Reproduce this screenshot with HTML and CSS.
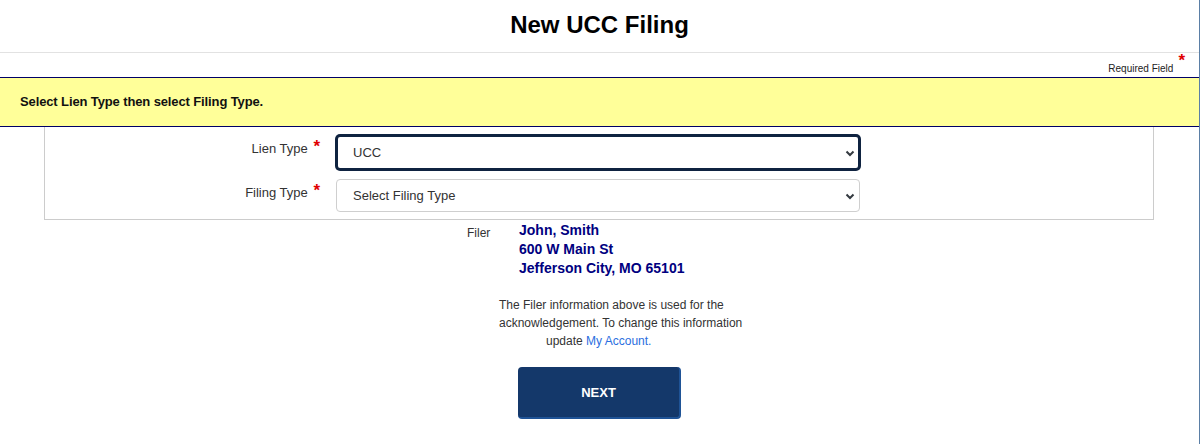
FILE: index.html
```html
<!DOCTYPE html>
<html lang="en">
<head>
<meta charset="utf-8">
<title>New UCC Filing</title>
<link rel="stylesheet" href="styles.css">
</head>
<body>
<div class="page">
  <header class="page-header">
    <h1 class="title">New UCC Filing</h1>
  </header>
  <div class="required-row">
    <span class="required-text">Required Field</span><span class="req-star">*</span>
  </div>
  <div class="banner">Select Lien Type then select Filing Type.</div>
  <div class="form-box">
    <div class="form-grid">
      <label class="field-label" for="lien">Lien Type <span class="label-star">*</span></label>
      <div class="select-wrap">
        <select id="lien" class="select select-focus">
          <option>UCC</option>
        </select>
        <svg class="chev" width="10" height="7" viewBox="0 0 10 7"><path d="M1.5 1.5 L5 5 L8.5 1.5" fill="none" stroke="#343a40" stroke-width="2"/></svg>
      </div>
      <label class="field-label" for="filing">Filing Type <span class="label-star">*</span></label>
      <div class="select-wrap">
        <select id="filing" class="select">
          <option>Select Filing Type</option>
        </select>
        <svg class="chev" width="10" height="7" viewBox="0 0 10 7"><path d="M1.5 1.5 L5 5 L8.5 1.5" fill="none" stroke="#343a40" stroke-width="2"/></svg>
      </div>
    </div>
  </div>
  <div class="filer">
    <div class="filer-label">Filer</div>
    <div class="filer-info">
      <div>John, Smith</div>
      <div>600 W Main St</div>
      <div>Jefferson City, MO 65101</div>
    </div>
  </div>
  <p class="note">
    <span class="note-line">The Filer information above is used for the</span>
    <span class="note-line">acknowledgement. To change this information</span>
    <span class="note-line note-last">update <a href="#" class="link">My Account.</a></span>
  </p>
  <div class="actions">
    <button class="btn-next" type="button">NEXT</button>
  </div>
</div>
</body>
</html>
```

FILE: styles.css
```css
html, body {
  margin: 0;
  padding: 0;
  background: #ffffff;
}
body {
  font-family: "Liberation Sans", Arial, sans-serif;
  color: #222;
}
.page {
  box-sizing: border-box;
  width: 1200px;
  min-height: 444px;
  border-right: 1px solid #5b7fa6;
}
.page-header {
  height: 41px;
  padding-top: 11px;
  border-bottom: 1px solid #e2e2e2;
  text-align: center;
}
.title {
  margin: 0;
  font-size: 24px;
  line-height: 28px;
  font-weight: bold;
  color: #000;
}
.required-row {
  height: 24px;
  text-align: right;
  padding-right: 14px;
  font-size: 10px;
  line-height: 24px;
  color: #222;
}
.required-text {
  vertical-align: -4px;
}
.req-star {
  display: inline-block;
  margin-left: 5px;
  color: #e00000;
  font-size: 17px;
  font-weight: bold;
  vertical-align: 2px;
  line-height: 10px;
}
.banner {
  box-sizing: border-box;
  height: 50px;
  background: #ffff99;
  border-top: 1px solid #000066;
  border-bottom: 1px solid #000066;
  padding-left: 20px;
  font-size: 13px;
  font-weight: bold;
  line-height: 48px;
  letter-spacing: -0.12px;
  color: #111;
}
.form-box {
  margin-left: 44px;
  width: 1110px;
  box-sizing: border-box;
  border: 1px solid #cccccc;
  border-top: none;
  padding: 8px 0 7px 0;
}
.form-grid {
  display: grid;
  grid-template-columns: 275px 524px;
  column-gap: 16px;
  row-gap: 9px;
}
.field-label {
  text-align: right;
  font-size: 13px;
  line-height: 20px;
  padding-top: 4px;
  color: #333;
}
.label-star {
  display: inline-block;
  color: #e00000;
  font-size: 17px;
  font-weight: bold;
  line-height: 10px;
  vertical-align: 1px;
  margin-left: 2px;
}
.select-wrap {
  position: relative;
  width: 524px;
}
.select {
  appearance: none;
  -webkit-appearance: none;
  display: block;
  box-sizing: border-box;
  width: 524px;
  height: 33px;
  border: 1px solid #cfcfcf;
  border-radius: 4px;
  background: #fff;
  padding: 0 30px 0 16px;
  font-family: "Liberation Sans", Arial, sans-serif;
  font-size: 13px;
  color: #333;
  margin: 0;
}
.select-focus {
  height: 35px;
  border: 2px solid #0f2340;
  padding-left: 15px;
  box-shadow: 0 0 0 1px #0f2340;
}
.chev {
  position: absolute;
  right: 5px;
  top: 50%;
  margin-top: -3px;
}
.filer {
  display: flex;
  padding-left: 467px;
  padding-top: 1px;
}
.filer-label {
  width: 52px;
  font-size: 12px;
  line-height: 19px;
  padding-top: 3px;
  color: #333;
}
.filer-info {
  font-size: 14px;
  font-weight: bold;
  line-height: 19px;
  color: #000080;
}
.note {
  margin: 18px 0 0 499px;
  font-size: 12px;
  line-height: 18px;
  color: #333;
}
.note-line {
  display: block;
  white-space: nowrap;
}
.note-last {
  padding-left: 47px;
}
.link {
  color: #2a6ee0;
  text-decoration: none;
}
.actions {
  padding: 17px 0 0 518px;
}
.btn-next {
  box-sizing: border-box;
  width: 163px;
  height: 52px;
  background: #14386a;
  border: none;
  border-right: 2px solid #1f5396;
  border-bottom: 2px solid #1f5396;
  border-radius: 4px;
  color: #fff;
  font-family: "Liberation Sans", Arial, sans-serif;
  font-size: 13px;
  font-weight: bold;
  cursor: pointer;
}
```
